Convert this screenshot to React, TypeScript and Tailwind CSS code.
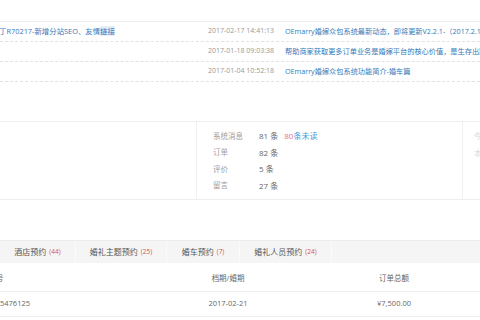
const font = { fontFamily: '"Open Sans", "Noto Sans CJK SC", sans-serif' }

const news = [
  { left: '丁R70217-新增分站SEO、友情', hl: '链接', date: '2017-02-17 14:41:13', title: 'OEmarry婚嫁众包系统最新动态，即将更新V2.2.1-（2017.2.17）' },
  { left: '', hl: '', date: '2017-01-18 09:03:38', title: '帮助商家获取更多订单业务是婚嫁平台的核心价值，是生存出路' },
  { left: '', hl: '', date: '2017-01-04 10:52:18', title: 'OEmarry婚嫁众包系统功能简介-婚车篇' },
]

const stats = [
  { label: '系统消息', value: '81 条', extra: true },
  { label: '订单', value: '82 条' },
  { label: '评价', value: '5 条' },
  { label: '留言', value: '27 条' },
]

const tabs = [
  { name: '酒店预约', count: 44, w: 'w-[76px]' },
  { name: '婚礼主题预约', count: 25, w: 'w-[91px]' },
  { name: '婚车预约', count: 7, w: 'w-[73px]' },
  { name: '婚礼人员预约', count: 24, w: 'w-[92px]' },
]

export default function App() {
  return (
    <div className="w-[480px] h-[320px] overflow-hidden bg-white" style={font}>
      {/* latest news */}
      <div className="mt-[21px] border-t border-[#eeeeee]">
        {news.map((n, i) => (
          <div key={i} className="flex h-[20px] items-center border-b border-dashed border-[#e2e2e2] whitespace-nowrap">
            <div className="w-[208px] shrink-0 overflow-hidden text-[7.4px] text-[#3678b9]">
              <span className="-ml-[1px]">{n.left}</span>
              {n.hl && <span className="bg-[#e3eef9]">{n.hl}</span>}
            </div>
            <div className="w-[77px] shrink-0 text-[7px] text-[#999999]">{n.date}</div>
            <div className="flex-1 overflow-hidden text-[7.2px] text-[#3678b9]">{n.title}</div>
          </div>
        ))}
      </div>

      {/* stats panel */}
      <div className="mt-[39px] flex h-[79px] border-y border-[#eeeeee]">
        <div className="w-[197px] shrink-0 border-r border-[#f0f0f0]"></div>
        <div className="w-[266px] shrink-0 border-r border-[#f0f0f0] pl-[16px] pt-[6px]">
          {stats.map((s) => (
            <div key={s.label} className="flex h-[16.5px] items-center whitespace-nowrap">
              <span className="w-[46px] text-[7.5px] text-[#a0a0a0]">{s.label}</span>
              <span className="text-[8px] text-[#666666]">{s.value}</span>
              {s.extra && (
                <span className="ml-[6px] text-[8px]">
                  <span className="text-[#e8707c]">80</span>
                  <span className="text-[#3a9fdc]">条未读</span>
                </span>
              )}
            </div>
          ))}
        </div>
        <div className="flex-1 overflow-hidden pl-[11px] pt-[6px] text-[7.5px] text-[#d8d8d8] whitespace-nowrap">
          <div className="h-[16.5px] leading-[16.5px]">今日</div>
          <div className="h-[16.5px] leading-[16.5px]">本月</div>
        </div>
      </div>

      {/* booking tabs */}
      <div className="mt-[40px] flex h-[23px] border-t border-[#ececec] bg-[#f5f5f5]">
        {tabs.map((t) => (
          <div key={t.name} className={`${t.w} flex shrink-0 items-center justify-center border-r border-[#fbfbfb] whitespace-nowrap`}>
            <span className="text-[8px] text-[#555555]">{t.name}</span>
            <span className="ml-[3px] text-[6.5px] text-[#d9534f]">({t.count})</span>
          </div>
        ))}
      </div>

      {/* orders table */}
      <div className="flex h-[29px] items-center border-b border-[#eeeeee] pt-[4px] text-[7.5px] text-[#666666] whitespace-nowrap">
        <div className="w-[145px] shrink-0 overflow-hidden">
          <span className="-ml-[19px] inline-block">订单号</span>
        </div>
        <div className="w-[166px] shrink-0 text-center">档期/婚期</div>
        <div className="w-[166px] shrink-0 text-center">订单总额</div>
      </div>
      <div className="flex h-[25px] items-center border-b border-[#eeeeee] text-[7.5px] text-[#666666] whitespace-nowrap">
        <div className="w-[145px] shrink-0 overflow-hidden">5476125</div>
        <div className="w-[166px] shrink-0 text-center">2017-02-21</div>
        <div className="w-[166px] shrink-0 text-center">¥7,500.00</div>
      </div>
    </div>
  )
}
